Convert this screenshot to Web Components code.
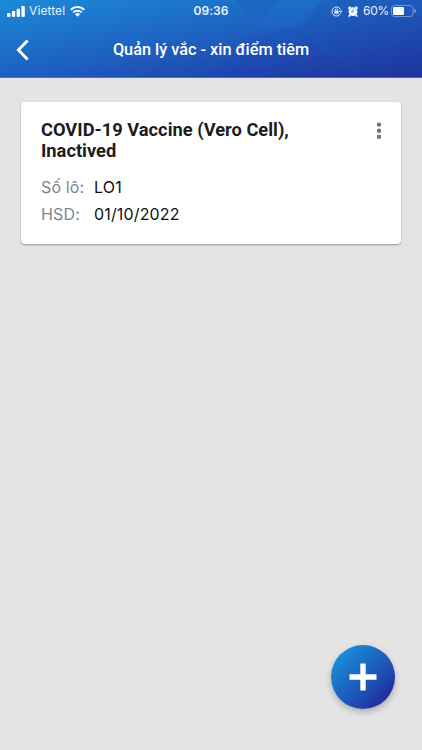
<!DOCTYPE html>
<html lang="vi">
<head>
    <meta charset="UTF-8">
    <meta name="viewport" content="width=device-width, initial-scale=1.0">
    <title>Quản lý vắc - xin điểm tiêm</title>
    <style>
        body {
            margin: 0;
            background: #e4e4e4;
            font-family: Inter, "Noto Sans", sans-serif;
        }
    </style>
</head>
<body>
    <vaccine-app></vaccine-app>
    <script>
        class StatusBar extends HTMLElement {
            constructor() {
                super();
                this.attachShadow({mode: 'open'}).innerHTML = `
                    <style>
                        :host {
                            display: grid;
                            grid-template-columns: 1fr auto 1fr;
                            align-items: center;
                            height: 22px;
                            color: #e9f2fc;
                            font-size: 12px;
                            line-height: 22px;
                        }
                        div { display: flex; align-items: center; }
                        svg { display: block; flex: none; }
                        .left { padding-left: 7px; }
                        .carrier { margin: 0 5px 0 4px; letter-spacing: 0.1px; }
                        .time { font-weight: 600; font-size: 12px; letter-spacing: 0.1px; }
                        .right { justify-content: flex-end; padding-right: 6px; }
                        .alarm { margin: 0 5px 0 5px; }
                        .percent { margin-right: 2px; letter-spacing: -0.3px; }
                    </style>
                    <div class="left">
                        <svg width="18" height="11" viewBox="0 0 18 11" fill="#fff">
                            <rect x="0" y="7" width="3.4" height="4" rx="1"/>
                            <rect x="4.8" y="5" width="3.4" height="6" rx="1"/>
                            <rect x="9.6" y="2.7" width="3.4" height="8.3" rx="1"/>
                            <rect x="14.4" y="0" width="3.4" height="11" rx="1"/>
                        </svg>
                        <span class="carrier">Viettel</span>
                        <svg width="15" height="11" viewBox="0 0 15 11">
                            <path d="M.8 3.8a9.6 9.6 0 0 1 13.4 0M3.2 6.4a6.1 6.1 0 0 1 8.6 0" fill="none" stroke="#fff" stroke-width="2"/>
                            <path d="M5 8.2a3.6 3.6 0 0 1 5 0L7.5 10.8z" fill="#fff"/>
                        </svg>
                    </div>
                    <span class="time">09:36</span>
                    <div class="right">
                        <svg width="12" height="11" viewBox="0 0 12 11">
                            <path d="M9.5 7.5A4.5 4.5 0 1 1 9.5 3.5" fill="none" stroke="#e9f2fc" stroke-width="1"/>
                            <path d="M8 4.7h3.6L9.8 7z" fill="#e9f2fc"/>
                            <rect x="3.5" y="4.8" width="4" height="3" rx=".4" fill="#e9f2fc"/>
                            <path d="M4.3 5V4a1.2 1.2 0 0 1 2.4 0v1" fill="none" stroke="#e9f2fc" stroke-width=".8"/>
                        </svg>
                        <svg class="alarm" width="10" height="11" viewBox="0 0 10 11">
                            <circle cx="5" cy="5.6" r="4.4" fill="#f3f8ff"/>
                            <path d="M.9 2.2L2 1.2M9.1 2.2L8 1.2M2 9L1.2 10M8 9l.8 1" stroke="#f3f8ff" stroke-width="1.8" stroke-linecap="round"/>
                            <path d="M5.2 3.2v2.7H3.1" fill="none" stroke="#5582c9" stroke-width=".9"/>
                        </svg>
                        <span class="percent">60%</span>
                        <svg width="25" height="12" viewBox="0 0 25 12">
                            <rect x=".5" y=".5" width="21.5" height="11" rx="3" fill="none" stroke="#7694d3" stroke-width="1"/>
                            <rect x="2" y="2" width="11" height="8" rx="1.3" fill="#fff"/>
                            <path d="M23.2 4a2 2 0 0 1 0 4z" fill="#7694d3"/>
                        </svg>
                    </div>
                `;
            }
        }

        class AppHeader extends HTMLElement {
            constructor() {
                super();
                this.attachShadow({mode: 'open'}).innerHTML = `
                    <style>
                        :host {
                            display: grid;
                            height: 78px;
                            background: linear-gradient(to bottom right, #1b8ad8 0%, #1e5fbf 50%, #20309c 100%);
                        }
                        .facets, .bar { grid-area: 1 / 1; }
                        .facets { display: block; }
                        nav {
                            display: grid;
                            grid-template-columns: 46px 1fr 46px;
                            align-items: center;
                            height: 55px;
                        }
                        nav svg { display: block; margin-left: 16px; }
                        h1 {
                            margin: 0;
                            color: #fff;
                            font: 500 16.3px/24px Roboto, sans-serif;
                            text-align: center;
                            white-space: nowrap;
                        }
                    </style>
                    <svg class="facets" width="422" height="78" viewBox="0 0 422 78">
                        <defs>
                            <linearGradient id="fade" x1="0" y1="0" x2="0" y2="1">
                                <stop offset="0" stop-color="#16309a" stop-opacity=".14"/>
                                <stop offset="1" stop-color="#16309a" stop-opacity="0"/>
                            </linearGradient>
                        </defs>
                        <path d="M235 0h45l-24 26z" fill="url(#fade)"/>
                        <path d="M280 0h42l-22 26-38 8-6-8z" fill="#1e86e0" fill-opacity=".13"/>
                        <path d="M322 0h100v78h-48L302 26z" fill="#1840a8" fill-opacity=".12"/>
                        <path d="M262 30l-56 48h146l-50-52z" fill="#1c3cae" fill-opacity=".1"/>
                        <path d="M0 77.5h422" stroke="#7fb0ec" stroke-opacity=".4"/>
                    </svg>
                    <div class="bar">
                        <status-bar></status-bar>
                        <nav>
                            <svg width="14" height="22" viewBox="0 0 14 22">
                                <path d="M11.6 1.6L2.4 11l9.2 9.4" fill="none" stroke="#fff" stroke-width="2.9"/>
                            </svg>
                            <h1><slot></slot></h1>
                        </nav>
                    </div>
                `;
            }
        }

        class VaccineCard extends HTMLElement {
            constructor() {
                super();
                this.attachShadow({mode: 'open'}).innerHTML = `
                    <style>
                        :host {
                            display: block;
                            box-sizing: border-box;
                            height: 142px;
                            padding: 17px 17px 0 20px;
                            background: #fff;
                            border-radius: 4px;
                            box-shadow: 0 1px 2px rgba(0, 0, 0, 0.35);
                        }
                        .top { display: flex; justify-content: space-between; }
                        h2 {
                            margin: 0;
                            width: 270px;
                            color: #1c1c1c;
                            font: 700 18.3px/21.4px Roboto, sans-serif;
                        }
                        svg { display: block; margin-top: 3px; }
                        dl {
                            display: grid;
                            grid-template-columns: 53px 1fr;
                            margin: 12px 0 0;
                            font-size: 16px;
                            line-height: 27.3px;
                            letter-spacing: 0.15px;
                        }
                        dt { color: #7c8691; }
                        dd { margin: 0; color: #111; }
                    </style>
                    <div class="top">
                        <h2><slot></slot></h2>
                        <svg width="10" height="18" viewBox="0 0 10 18" fill="#6c7780">
                            <circle cx="5" cy="2.6" r="2.2"/>
                            <circle cx="5" cy="8.7" r="2.2"/>
                            <circle cx="5" cy="14.8" r="2.2"/>
                        </svg>
                    </div>
                    <dl>
                        <dt>Số lô:</dt><dd><slot name="lot"></slot></dd>
                        <dt>HSD:</dt><dd><slot name="expiry"></slot></dd>
                    </dl>
                `;
            }
        }

        class AddButton extends HTMLElement {
            constructor() {
                super();
                this.attachShadow({mode: 'open'}).innerHTML = `
                    <style>
                        :host { display: block; width: 64px; height: 64px; }
                        button {
                            display: grid;
                            place-items: center;
                            width: 100%;
                            height: 100%;
                            padding: 0;
                            border: 0;
                            border-radius: 50%;
                            background: linear-gradient(135deg, #1b91dd 10%, #1d5fbd 50%, #20289c 90%);
                            box-shadow: 0 3px 6px rgba(0, 0, 0, 0.25);
                        }
                    </style>
                    <button aria-label="+">
                        <svg width="28" height="28" viewBox="0 0 28 28">
                            <path d="M14 .5v27M.5 14h27" stroke="#fff" stroke-width="5.4"/>
                        </svg>
                    </button>
                `;
            }
        }

        class VaccineApp extends HTMLElement {
            constructor() {
                super();
                this.attachShadow({mode: 'open'}).innerHTML = `
                    <style>
                        :host {
                            display: flex;
                            flex-direction: column;
                            height: 750px;
                            background: #e4e4e4;
                        }
                        main { flex: 1; padding: 24px 21px 0; }
                        footer {
                            display: flex;
                            justify-content: flex-end;
                            padding: 0 27.5px 41px 0;
                        }
                    </style>
                    <app-header>Quản lý vắc - xin điểm tiêm</app-header>
                    <main>
                        <vaccine-card>
                            COVID-19 Vaccine (Vero Cell), Inactived
                            <span slot="lot">LO1</span>
                            <span slot="expiry">01/10/2022</span>
                        </vaccine-card>
                    </main>
                    <footer><add-button></add-button></footer>
                `;
            }
        }

        customElements.define('status-bar', StatusBar);
        customElements.define('app-header', AppHeader);
        customElements.define('vaccine-card', VaccineCard);
        customElements.define('add-button', AddButton);
        customElements.define('vaccine-app', VaccineApp);
    </script>
</body>
</html>
